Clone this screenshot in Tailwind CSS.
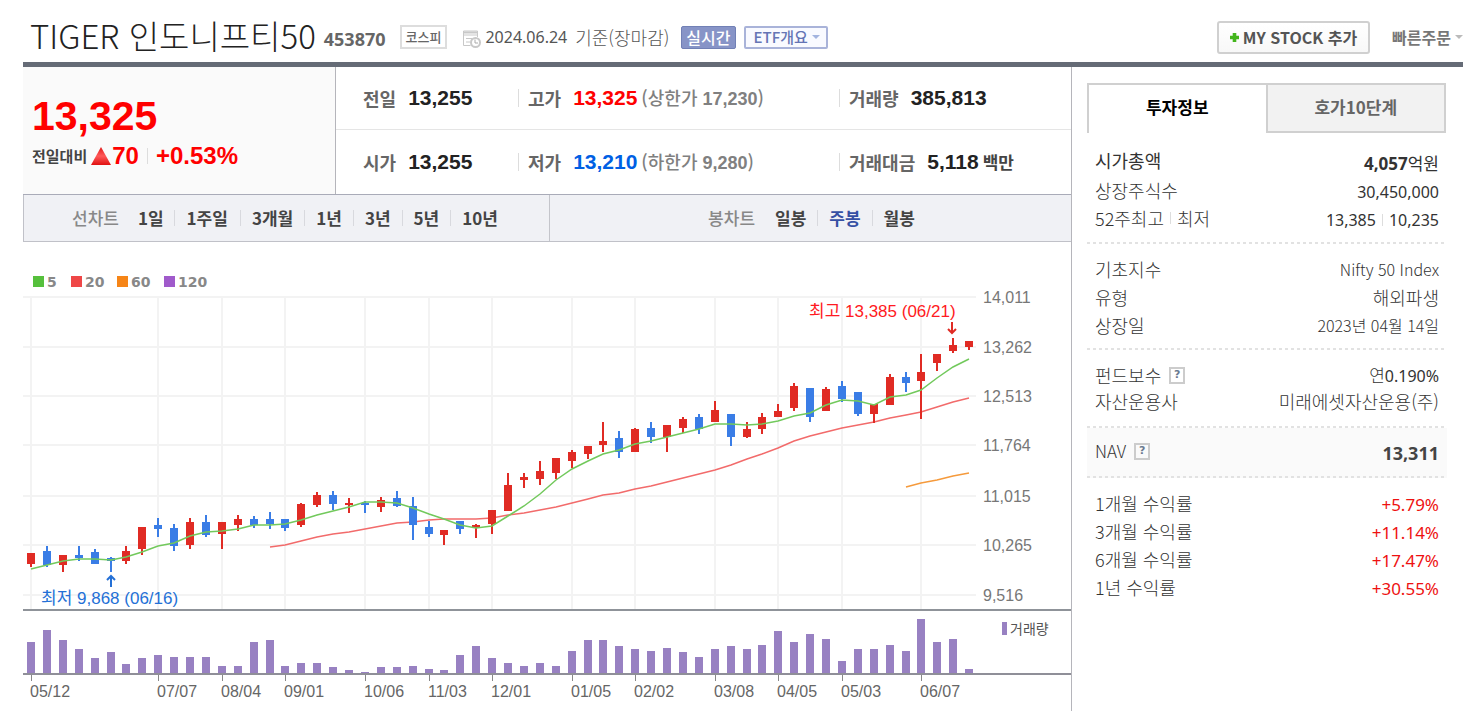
<!DOCTYPE html>
<html lang="ko">
<head>
<meta charset="utf-8">
<meta name="viewport" content="width=device-width, initial-scale=1">
<title>TIGER 인도니프티50</title>
<script src="https://cdn.jsdelivr.net/npm/@tailwindcss/browser@4"></script>
</head>
<body class="bg-white font-['Noto_Sans_CJK_KR',sans-serif] text-[#333]">
<div class="mr-[9px] ml-[23px]">

  <header class="flex h-[62px] items-center pt-3 pl-[7px] whitespace-nowrap">
    <h1 class="pb-1 text-[33px] leading-10 font-light text-[#222]">TIGER 인도니프티50</h1>
    <span class="ml-2 pt-1 font-['Noto_Sans',sans-serif] text-lg leading-6 font-bold text-[#666]">453870</span>
    <span class="ml-[14px] flex h-6 items-center border-2 border-[#ddd] px-1 text-[13px] font-medium text-[#666]">코스피</span>
    <svg class="mt-1 ml-4 h-[18px] w-[18px] shrink-0" viewBox="0 0 18 18" fill="none" stroke="#c8c8c8" aria-hidden="true">
      <path d="M.5 1h14v4H.5zM.5 5v10.500h7M3 8.500h6M3 12h4M14.500 5v2" />
      <path d="M1 2.500h13" stroke-width="2"/>
      <circle cx="12.500" cy="12.500" r="4.500" fill="#fff" stroke-width="2"/>
      <path d="M12 9.500v3.500h3" stroke="#aaa"/>
    </svg>
    <span class="ml-1 flex items-center font-['Noto_Sans',sans-serif] text-base text-[#555]">2024.06.24 <span class="ml-2 font-['Noto_Sans_CJK_KR',sans-serif] text-lg leading-6 font-light">기준(장마감)</span></span>
    <button class="ml-3 h-[23px] rounded-[2px] border border-[#7180b5] bg-[#8794c7] px-1 text-base leading-5 font-medium text-white">실시간</button>
    <button class="ml-2 flex h-[23px] items-center gap-1 rounded-[2px] border-2 border-[#a9b3d9] bg-[#f9faff] pr-[6px] pl-2 text-[15px] font-medium text-[#6575b5]">ETF개요
      <svg class="h-1 w-2" viewBox="0 0 8 4" fill="#a3b4df" aria-hidden="true"><path d="M0 0h8L4 4z"/></svg>
    </button>
    <button class="ml-auto flex h-[33px] items-center gap-1 rounded-[3px] border-2 border-[#d0d0d0] bg-linear-to-b from-white to-[#f8f8f8] px-[11px] text-base font-bold text-[#555]">
      <svg class="h-[9px] w-[9px]" viewBox="0 0 10 10" fill="#43b51c" aria-hidden="true"><path d="M3 0h4v3h3v4H7v3H3V7H0V3h3z"/></svg>
      MY STOCK 추가
    </button>
    <button class="ml-[22px] flex items-center gap-1 text-base font-bold text-[#777]">빠른주문
      <svg class="h-1 w-2" viewBox="0 0 8 4" fill="#bbb" aria-hidden="true"><path d="M0 0h8L4 4z"/></svg>
    </button>
  </header>
  <div class="h-[5px] bg-[#656b76]"></div>

  <main class="flex">
    <section class="min-w-0 flex-1 border-r border-[#b5b5bb]">

      <div class="flex border-b border-[#a9abb8]">
        <div class="w-[313px] shrink-0 border-r border-[#b5b5bb] bg-[#fafafa] pt-[26px] pl-[9px] font-['Liberation_Sans',sans-serif] font-bold text-[#f00]">
          <p class="text-[41px] leading-[46px]">13,325</p>
          <p class="flex items-center text-2xl leading-[34px]">
            <span class="font-['Noto_Sans_CJK_KR',sans-serif] text-[15px] text-[#444]">전일대비</span>
            <svg class="ml-1 h-[18px] w-5 shrink-0" viewBox="0 0 20 18" aria-label="상승">
              <defs><linearGradient id="up" x1="0" y1="0" x2="0" y2="1"><stop offset="0" stop-color="#e01818"/><stop offset=".5" stop-color="#ff5a5a"/><stop offset="1" stop-color="#e01010"/></linearGradient></defs>
              <path d="M10 0l10 18H0z" fill="url(#up)"/>
            </svg>
            <span class="ml-px">70</span>
            <span class="mx-2 h-4 w-px bg-[#ddd]"></span>
            <span>+0.53%</span>
          </p>
        </div>
        <table class="flex-1 text-left text-lg font-bold whitespace-nowrap text-[#666]">
          <tbody class="block w-full">
            <tr class="flex h-[63px] w-full items-center border-b border-[#e5e5e5]">
              <td class="flex w-[182px] items-center pl-[27px]">전일<span class="ml-3 font-['Liberation_Sans',sans-serif] text-[21px] text-[#222]">13,255</span></td>
              <td class="flex w-[321px] items-center before:mr-[9px] before:h-[18px] before:w-px before:bg-[#ddd]">고가<span class="ml-3 font-['Liberation_Sans',sans-serif] text-[21px] text-[#f00]">13,325</span><span class="ml-1 font-medium text-[#808080]">(상한가 <span class="font-['Liberation_Sans',sans-serif] font-bold">17,230</span>)</span></td>
              <td class="flex items-center before:mr-[9px] before:h-[18px] before:w-px before:bg-[#ddd]">거래량<span class="ml-3 font-['Liberation_Sans',sans-serif] text-[21px] text-[#222]">385,813</span></td>
            </tr>
            <tr class="flex h-16 w-full items-center">
              <td class="flex w-[182px] items-center pl-[27px]">시가<span class="ml-3 font-['Liberation_Sans',sans-serif] text-[21px] text-[#222]">13,255</span></td>
              <td class="flex w-[321px] items-center before:mr-[9px] before:h-[18px] before:w-px before:bg-[#ddd]">저가<span class="ml-3 font-['Liberation_Sans',sans-serif] text-[21px] text-[#005fe4]">13,210</span><span class="ml-1 font-medium text-[#808080]">(하한가 <span class="font-['Liberation_Sans',sans-serif] font-bold">9,280</span>)</span></td>
              <td class="flex items-center before:mr-[9px] before:h-[18px] before:w-px before:bg-[#ddd]">거래대금<span class="ml-3 font-['Liberation_Sans',sans-serif] text-[21px] text-[#222]">5,118</span><span class="ml-1 text-[17px] text-[#444]">백만</span></td>
            </tr>
          </tbody>
        </table>
      </div>

      <nav class="flex h-[47px] border-b border-l border-[#c0c1c8] bg-[#f0f1f5] text-[17px] font-bold whitespace-nowrap text-[#444]">
        <div class="flex w-[526px] items-center border-r border-[#c4c5cb] pl-12">
          <span class="mr-[19px] font-medium text-[#888]">선차트</span>
          <div class="flex items-center divide-x divide-[#d8d9de] leading-4">
            <button class="pr-[10px]">1일</button>
            <button class="px-[12px]">1주일</button>
            <button class="px-[11px]">3개월</button>
            <button class="px-[11px]">1년</button>
            <button class="px-[11px]">3년</button>
            <button class="px-[11px]">5년</button>
            <button class="pl-[11px]">10년</button>
          </div>
        </div>
        <div class="flex flex-1 items-center justify-center">
          <span class="mr-5 ml-[2px] font-medium text-[#888]">봉차트</span>
          <div class="flex items-center divide-x divide-[#d8d9de] leading-4">
            <button class="pr-[11px]">일봉</button>
            <button class="px-[11px] text-[#3650a4]">주봉</button>
            <button class="pl-[11px]">월봉</button>
          </div>
        </div>
      </nav>

      <svg id="chart" class="block h-auto w-full" viewBox="23 242 1048 469" role="img" aria-label="주봉 차트"></svg>
    </section>

    <aside class="w-[391px] shrink-0 pt-4 pr-4 pl-[15px] text-lg leading-7 text-[#333]">
      <div class="flex h-[50px] text-[17px] font-bold" role="tablist">
        <button role="tab" aria-selected="true" class="flex-1 border-t-2 border-l-2 border-[#d0d0d0] pb-1 text-black">투자정보</button>
        <button role="tab" aria-selected="false" class="mr-px flex-1 border-2 border-[#d0d0d0] bg-[#f2f2f2] pb-[2px] text-[#666]">호가10단계</button>
      </div>
      <table class="block bg-[repeating-linear-gradient(90deg,#e2e2e2_0_3px,transparent_3px_6px)] bg-[length:100%_2px] bg-bottom bg-no-repeat px-2 pt-[14px] pb-3">
        <tbody class="block">
          <tr class="flex justify-between"><th class="-mt-px font-normal">시가총액</th><td class="text-[17px] leading-8"><b class="font-['Noto_Sans',sans-serif]">4,057</b>억원</td></tr>
          <tr class="flex h-7 justify-between"><th class="-mt-1 font-light">상장주식수</th><td class="font-['Noto_Sans',sans-serif] text-base leading-6">30,450,000</td></tr>
          <tr class="flex h-6 justify-between"><th class="-mt-1 flex items-center font-light">52주최고<i class="mx-[6px] h-3 w-px bg-[#ddd]"></i>최저</th><td class="flex items-center font-['Noto_Sans',sans-serif] text-base">13,385<i class="mx-[6px] h-3 w-px bg-[#ddd]"></i>10,235</td></tr>
        </tbody>
      </table>
      <table class="block bg-[repeating-linear-gradient(90deg,#e2e2e2_0_3px,transparent_3px_6px)] bg-[length:100%_2px] bg-bottom bg-no-repeat px-2 pt-[11px] pb-[11px]">
        <tbody class="block">
          <tr class="flex justify-between"><th class="font-light">기초지수</th><td class="text-base leading-7 font-light">Nifty 50 Index</td></tr>
          <tr class="flex justify-between"><th class="font-light">유형</th><td class="font-light">해외파생</td></tr>
          <tr class="flex justify-between"><th class="font-light">상장일</th><td class="text-base leading-7 font-light">2023년 04월 14일</td></tr>
        </tbody>
      </table>
      <table class="block bg-[repeating-linear-gradient(90deg,#e2e2e2_0_3px,transparent_3px_6px)] bg-[length:100%_2px] bg-bottom bg-no-repeat px-2 pt-[9px] pb-[11px]">
        <tbody class="block">
          <tr class="flex justify-between"><th class="flex items-center gap-2 font-light">펀드보수<button class="h-[17px] w-4 border-2 border-[#ccc] font-['DejaVu_Sans',sans-serif] text-[11px] leading-3 font-bold text-[#6b7a90]" aria-label="펀드보수 도움말">?</button></th><td class="text-[17px] leading-8 font-light">연<span class="font-['Noto_Sans',sans-serif] text-base font-normal">0.190%</span></td></tr>
          <tr class="flex h-[26px] justify-between"><th class="-mt-1 font-light">자산운용사</th><td class="-mt-1 font-light">미래에셋자산운용(주)</td></tr>
        </tbody>
      </table>
      <table class="block bg-[#fafafa] bg-[repeating-linear-gradient(90deg,#e2e2e2_0_3px,transparent_3px_6px)] bg-[length:100%_2px] bg-bottom bg-no-repeat px-2 pt-[9px] pb-[13px]">
        <tbody class="block">
          <tr class="flex h-7 items-center justify-between"><th class="flex items-center gap-2 text-[17px] font-light">NAV<button class="h-[17px] w-4 border-2 border-[#ccc] font-['DejaVu_Sans',sans-serif] text-[11px] leading-3 font-bold text-[#6b7a90]" aria-label="NAV 도움말">?</button></th><td class="pt-1 font-['Noto_Sans',sans-serif] text-lg font-bold text-[#444]">13,311</td></tr>
        </tbody>
      </table>
      <table class="block px-2 pt-[11px]">
        <tbody class="block">
          <tr class="flex h-7 items-center justify-between"><th class="font-light">1개월 수익률</th><td class="pt-1 font-['Noto_Sans',sans-serif] text-[17px] text-[#e11]">+5.79%</td></tr>
          <tr class="flex h-7 items-center justify-between"><th class="font-light">3개월 수익률</th><td class="pt-1 font-['Noto_Sans',sans-serif] text-[17px] text-[#e11]">+11.14%</td></tr>
          <tr class="flex h-7 items-center justify-between"><th class="font-light">6개월 수익률</th><td class="pt-1 font-['Noto_Sans',sans-serif] text-[17px] text-[#e11]">+17.47%</td></tr>
          <tr class="flex h-7 items-center justify-between"><th class="font-light">1년 수익률</th><td class="pt-1 font-['Noto_Sans',sans-serif] text-[17px] text-[#e11]">+30.55%</td></tr>
        </tbody>
      </table>
    </aside>
  </main>
</div>

<script>
// Weekly candles: direction, body top, body bottom, wick top, wick bottom, volume bar top
const R = '#e02b24', B = '#3a7de6';
const weeks = [
[R,553,564,553,567,642],[B,551,565,546,567,630],[R,555,565,555,572,640],[B,555,558,546,561,649],[B,552,564,549,564,658],
[B,558,561,557,572,652],[R,551,561,546,564,664],[R,527,549,527,555,658],[B,525,529,518,537,655],[B,528,546,524,551,657],
[R,522,545,518,549,657],[B,522,535,515,537,657],[R,522,534,522,549,666],[R,519,525,515,531,666],[B,519,525,516,528,642],
[B,519,524,512,529,640],[B,519,528,519,531,666],[R,504,525,503,527,663],[R,495,505,492,507,663],[B,495,504,491,510,667],
[R,503,504,498,513,670],[B,503,505,501,513,672],[R,500,507,497,512,667],[B,498,506,491,507,667],[B,506,525,497,540,666],
[B,527,534,521,537,669],[R,530,535,530,545,670],[B,521,529,521,534,655],[R,525,528,524,538,646],[R,510,524,510,534,658],
[R,485,511,473,511,663],[R,477,480,473,488,666],[R,471,479,461,485,663],[R,458,473,458,479,666],[R,452,461,450,468,651],
[R,446,454,446,459,640],[R,441,445,422,452,640],[B,438,452,431,458,646],[R,429,452,428,452,649],[B,428,437,422,443,651],
[R,425,437,425,452,648],[R,419,428,417,433,652],[B,417,429,414,434,657],[R,410,422,401,422,649],[B,414,437,414,446,646],
[R,429,437,422,438,649],[R,417,429,413,434,645],[R,411,417,404,417,631],[R,386,408,383,411,642],[B,388,417,388,422,634],
[R,389,411,387,411,639],[B,386,399,381,402,661],[B,392,414,392,416,649],[R,404,414,404,423,649],[R,377,405,374,405,645],
[B,377,383,372,392,651],[R,372,381,354,419,619],[R,354,363,354,371,642],[R,345,351,338,353,639],[R,341,347,341,350,669]];
const ma5 = [569,565,561,559,559,560,557,552,546,543,536,532,531,529,525,525,524,520,515,511,507,502,502,503,508,514,519,525,528,526,516,506,494,480,469,461,454,450,444,441,437,433,429,424,424,425,424,421,416,413,405,400,401,405,397,395,390,378,367,359];
const ma20 = [547,545,541,537,534,532,529,526,523,522,520,519,519,519,518,515,513,510,507,503,499,495,493,489,486,482,478,474,470,465,459,454,448,441,436,432,428,425,422,418,415,412,407,402,398];
const ma60 = [487,483,480,476,473];
const dates = {0:'05/12',8:'07/07',12:'08/04',16:'09/01',21:'10/06',25:'11/03',29:'12/01',34:'01/05',38:'02/02',43:'03/08',47:'04/05',51:'05/03',56:'06/07'};
const prices = [[297,'14,011'],[347,'13,262'],[396,'12,513'],[445,'11,764'],[496,'11,015'],[545,'10,265'],[595,'9,516']];
const X = i => Math.round(31 + i * 15.9);
let s = '';
const rect = (x, y, w, h, f) => { s += `<rect x="${x}" y="${y}" width="${w}" height="${h}" fill="${f}"/>`; };
const text = (x, y, t, f, size, extra = '') => { s += `<text x="${x}" y="${y}" fill="${f}" font-size="${size}" font-family="Liberation Sans, Noto Sans CJK KR, sans-serif" ${extra}>${t}</text>`; };
prices.forEach(([y, t]) => { rect(23, y - 1, 953, 2, '#f3f3f3'); text(983, y + 6, t, '#777', 16); });
Object.keys(dates).forEach(i => { rect(X(+i) - 1, 297, 2, 312, '#f3f3f3'); rect(X(+i), 675, 1, 6, '#888'); text(X(+i) - 1, 697, dates[i], '#666', 16); });
[['#56c03c', 33, '5'], ['#ef4747', 71, '20'], ['#f68517', 117, '60'], ['#a05acb', 164, '120']].forEach(([c, x, t]) => { rect(x, 276, 11, 11, c); text(x + 14, 287, t, '#888', 14, 'font-weight="bold" style="font-family:DejaVu Sans"'); });
const line = (start, pts, c) => { s += `<polyline fill="none" stroke="${c}" stroke-width="1.500" points="${pts.map((y, k) => X(start + k) + ',' + y).join(' ')}"/>`; };
line(15, ma20, '#f26b6b'); line(55, ma60, '#f59a3c');
weeks.forEach(([c, t, b, wt, wb, v], i) => {
  const x = X(i);
  rect(x - 4, v, 8, 674 - v, '#9881c2');
  rect(x - 1, wt, 2, wb - wt, c);
  rect(x - 4, t, 8, Math.max(b - t, 2), c);
});
line(0, ma5, '#72c95c');
rect(23, 609, 1048, 2, '#8f9399');
rect(23, 673, 1048, 2, '#8f8f98');
text(809, 317, '최고 13,385 (06/21)', '#ff1a22', 17);
text(41, 604, '최저 9,868 (06/16)', '#2470d6', 17);
s += '<path d="M952 322v11M948 329l4 4 4-4" fill="none" stroke="#e02b24" stroke-width="2"/>';
s += '<path d="M111 587v-11M107 580l4-4 4 4" fill="none" stroke="#2470d6" stroke-width="2"/>';
rect(1002, 622, 5, 13, '#9881c2');
text(1010, 634, '거래량', '#555', 14);
document.getElementById('chart').innerHTML = s;
</script>
</body>
</html>
